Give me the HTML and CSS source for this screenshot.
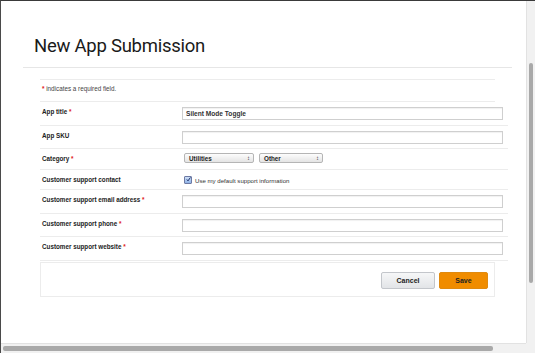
FILE: index.html
```html
<!DOCTYPE html>
<html>
<head>
<meta charset="utf-8">
<link rel="stylesheet" href="styles.css">
</head>
<body>
<div class="window">
  <div class="content">
    <div class="header">
      <h1 class="title">New App Submission</h1>
    </div>
    <div class="form">
      <div class="note"><span class="req">*</span> indicates a required field.</div>
      <div class="row">
        <div class="label">App title <span class="req">*</span></div>
        <div class="field"><div class="input">Silent Mode Toggle</div></div>
      </div>
      <div class="row">
        <div class="label">App SKU</div>
        <div class="field"><div class="input"></div></div>
      </div>
      <div class="row row-sel">
        <div class="label">Category <span class="req">*</span></div>
        <div class="field selects">
          <div class="select s1"><span>Utilities</span><span class="arr">&#8597;</span></div>
          <div class="select s2"><span>Other</span><span class="arr">&#8597;</span></div>
        </div>
      </div>
      <div class="row row-chk">
        <div class="label">Customer support contact</div>
        <div class="field chk">
          <span class="box"><svg width="9" height="9" viewBox="0 0 9 9"><path d="M1.5 4.5 L3.6 7 L8 0.8" fill="none" stroke="#1d2f6b" stroke-width="1.8"/></svg></span>
          <span class="chk-text">Use my default support information</span>
        </div>
      </div>
      <div class="row">
        <div class="label">Customer support email address <span class="req">*</span></div>
        <div class="field"><div class="input"></div></div>
      </div>
      <div class="row">
        <div class="label">Customer support phone <span class="req">*</span></div>
        <div class="field"><div class="input"></div></div>
      </div>
      <div class="row">
        <div class="label">Customer support website <span class="req">*</span></div>
        <div class="field"><div class="input"></div></div>
      </div>
      <div class="actions">
        <button class="btn cancel">Cancel</button>
        <button class="btn save">Save</button>
      </div>
    </div>
  </div>
  <div class="vscroll"><div class="vthumb"></div></div>
  <div class="hscroll"><div class="hthumb"></div></div>
  <div class="corner"></div>
</div>
</body>
</html>
```
FILE: styles.css
```css
* { box-sizing: border-box; }
html, body { margin: 0; padding: 0; background: #fff; }
body { font-family: "Liberation Sans", Arial, sans-serif; }
.window {
  width: 535px;
  height: 353px;
  border-top: 1px solid #3a3a3a;
  border-left: 1px solid #4a4a4a;
  display: grid;
  grid-template-columns: 1fr 9px;
  grid-template-rows: 1fr 10px;
  overflow: hidden;
}
.content { padding: 0 14px 0 22px; overflow: hidden; }
.header { border-bottom: 1px solid #e6e6e6; padding: 33px 0 0 11px; height: 67px; }
.title {
  margin: 0;
  font-family: Roboto, "Liberation Sans", sans-serif;
  font-weight: 400;
  font-size: 18.5px;
  letter-spacing: -0.25px;
  line-height: 24px;
  color: #1a1a1a;
}
.form { margin: 11px 4px 0 17px; }
.note {
  font-size: 6.3px; color: #444; padding: 5px 0 0 2px; height: 23px;
  border-top: 1px solid #ececec; border-bottom: 1px solid #ececec;
  margin-right: 13px;
}
.req { color: #e02020; font-weight: bold; }
.row { display: flex; height: 23.5px; border-bottom: 1px solid #ececec; }
.row-sel { height: 21px; }
.row-chk { height: 20px; }
.label { width: 142px; flex: none; padding: 6px 0 0 2px; font-size: 6.3px; font-weight: bold; color: #222; }
.field { flex: 1; padding: 5px 0 0 0; }
.input {
  width: 321px;
  height: 13px;
  border: 1px solid #cfcfcf;
  box-shadow: inset 0 1px 1px rgba(0,0,0,0.06);
  font-size: 6.6px;
  font-weight: bold;
  color: #333;
  padding: 2px 3px;
  line-height: 8px;
}
.selects { display: flex; gap: 5px; padding: 4px 0 0 2px; }
.select {
  height: 10px;
  border: 1px solid #b5b5b5;
  border-radius: 2px;
  background: linear-gradient(#fdfdfd, #e4e4e4);
  font-size: 6.3px;
  font-weight: bold;
  color: #222;
  display: flex;
  justify-content: space-between;
  align-items: center;
  padding: 0 3px 0 4px;
}
.s1 { width: 70px; }
.s2 { width: 64px; }
.arr { font-size: 6px; font-weight: normal; color: #333; }
.chk { display: flex; align-items: center; gap: 3px; padding: 4px 0 0 2px; height: 16px; }
.box {
  width: 8px; height: 8px;
  border: 1px solid #6d7aa3;
  border-radius: 1px;
  background: linear-gradient(#cfe0f7, #8fb2e6);
  display: flex; align-items: center; justify-content: center;
  overflow: visible;
}
.box svg { margin: -2px 0 0 1px; }
.chk-text { font-size: 6.1px; color: #333; }
.actions {
  margin-top: 1px;
  margin-right: 13px;
  height: 35px;
  border: 1px solid #ececec;
  display: flex;
  justify-content: flex-end;
  align-items: center;
  gap: 4px;
  padding: 2px 6px 0 0;
}
.btn {
  height: 17px;
  border-radius: 2px;
  font-family: "Liberation Sans", Arial, sans-serif;
  font-size: 7px;
  font-weight: bold;
  color: #222;
  padding: 0;
}
.cancel { width: 54px; border: 1px solid #c3c6cb; background: linear-gradient(#f6f7f8, #e2e4e7); }
.save { width: 49px; border: 1px solid #e08a10; background: #f08c00; }
.vscroll { background: #f1f1f1; border-left: 1px solid #e2e2e2; padding: 62px 2px 0 2px; }
.vthumb { height: 220px; background: #a9a9a9; border-radius: 2px; }
.hscroll { background: #f1f1f1; border-top: 1px solid #e2e2e2; padding: 2px 0 0 2px; }
.hthumb { width: 490px; height: 5px; background: #a9a9a9; border-radius: 2px; }
.corner { background: #f1f1f1; }
```
